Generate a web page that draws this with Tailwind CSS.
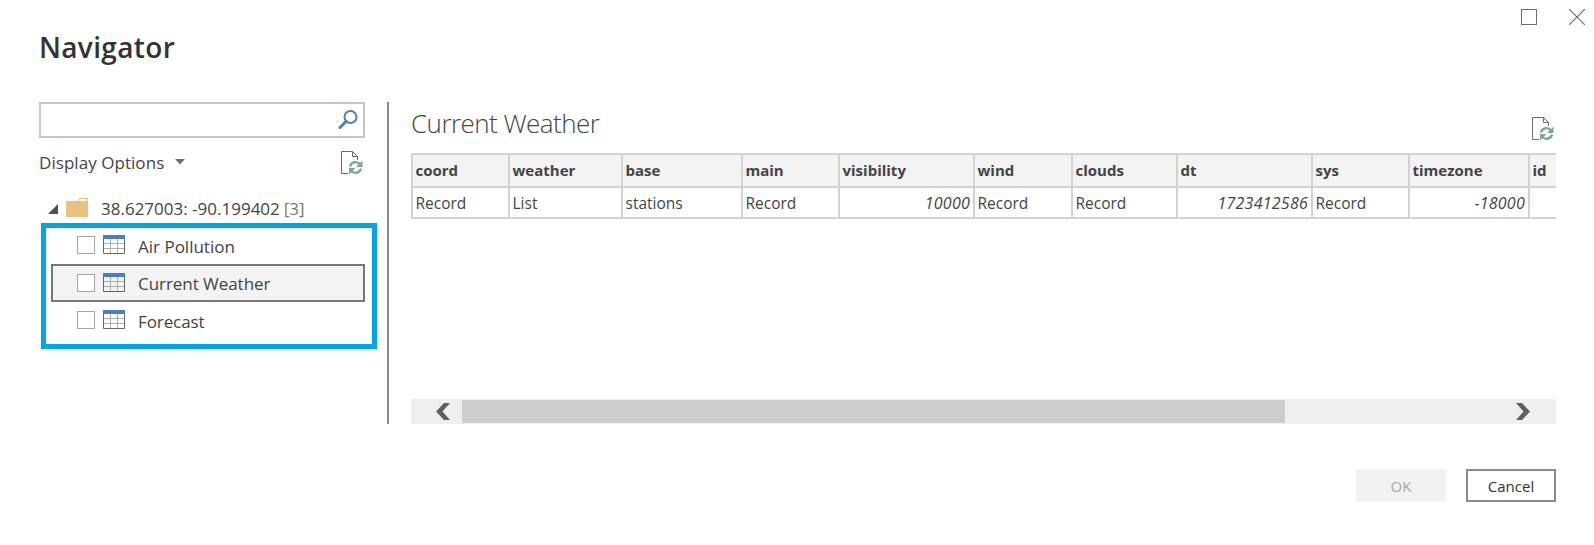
<!DOCTYPE html>
<html lang="en">
<head>
<meta charset="utf-8">
<title>Navigator</title>
<script src="https://cdn.jsdelivr.net/npm/@tailwindcss/browser@4"></script>
</head>
<body class="relative h-[545px] w-[1594px] overflow-hidden bg-white font-['Open_Sans',sans-serif] text-[#444]">
<svg width="0" height="0" class="absolute">
  <defs>
    <symbol id="refresh" viewBox="0 0 22 24">
      <path d="M7 22.500H.5V.5H11.500L16.500 5.500V9M11.500 .5V5.500H16.500" fill="none" stroke="#6a6a6a"/>
      <path d="M9 15.500A5.600 5.600 0 0 1 19 13.500M20 17.500A5.600 5.600 0 0 1 10 19.500" fill="none" stroke="#7aaa96" stroke-width="2.400"/>
      <path d="M21.500 9.500V16H15ZM8 23.500V17H14.500Z" fill="#7aaa96"/>
    </symbol>
    <symbol id="table" viewBox="0 0 22 19">
      <path d="M1 8.500H21M1 13.500H21M7.500 4V18M14.500 4V18" stroke="#adadad" fill="none"/>
      <path d="M.5 3V18.500H21.500V3" stroke="#666" fill="none"/>
      <path d="M0 0H22V4H0Z" fill="#4a80bb"/>
    </symbol>
  </defs>
</svg>

<header class="flex h-[102px] justify-between">
  <h1 class="ml-[39px] mt-[26px] h-10 text-[28px] leading-[42px] font-semibold tracking-[.35px] text-[#333]">Navigator</h1>
  <div class="mr-[9px] mt-[9px] flex gap-8">
    <svg width="16" height="16"><rect x=".5" y=".5" width="15" height="15" fill="none" stroke="#6e6e6e"/></svg>
    <svg width="16" height="16"><path d="M0 0L16 16M16 0L0 16" stroke="#6e6e6e" stroke-width="1.200"/></svg>
  </div>
</header>

<main class="flex h-[322px] pl-[39px]">
  <aside class="w-[348px]">
    <div class="flex h-9 w-[326px] items-start justify-end border-2 border-[#c6c6c6] pr-[5px] pt-[5px]">
      <svg width="20" height="21" fill="none" stroke="#4a80bb"><circle cx="12.500" cy="8" r="6" stroke-width="2"/><path d="M8 12.500L2 18.500" stroke-width="3" stroke-linecap="round"/></svg>
    </div>
    <div class="mt-[13px] flex h-6 w-[324px] items-start">
      <span class="text-[17px] leading-6 tracking-[.05px]">Display Options</span>
      <svg width="10" height="6" class="ml-[11px] mt-2"><path d="M0 0H10L5 5.500Z" fill="#6e6e6e"/></svg>
      <svg width="22" height="24" class="ml-auto"><use href="#refresh"/></svg>
    </div>
    <div class="mt-[21px] flex h-[27px] pl-[9px] text-[17px] leading-[26px]">
      <svg width="10" height="10" class="mt-2"><path d="M10 0V10H0Z" fill="#505050"/></svg>
      <svg width="22" height="19" class="ml-2 mt-[2px]"><path d="M0 3H11L14 0H22V19H0Z" fill="#e9c282"/><path d="M12.500 3L14.500 1H21V3Z" fill="#fff"/></svg>
      <span class="ml-[13px]">38.627003: -90.199402</span><span class="ml-1 text-[#777]">[3]</span>
    </div>
    <ul class="ml-[2px] h-[126px] w-[336px] border-5 border-[#00a4e8] pl-[5px] pt-0 text-[17px] leading-6">
      <li class="flex h-9 w-[314px] pl-[26px]">
        <i class="mt-2 size-[18px] border border-[#a6a6a6] bg-white"></i>
        <svg width="22" height="19" class="ml-2 mt-[7px]"><use href="#table"/></svg>
        <span class="ml-[13px] mt-[7px]">Air Pollution</span>
      </li>
      <li class="flex h-[38px] w-[314px] border-2 border-[#777] bg-[#f3f3f3] pl-[24px]">
        <i class="mt-2 size-[18px] border border-[#a6a6a6] bg-white"></i>
        <svg width="22" height="19" class="ml-2 mt-[7px]"><use href="#table"/></svg>
        <span class="ml-[13px] mt-[6px] tracking-[-.05px]">Current Weather</span>
      </li>
      <li class="flex h-9 w-[314px] pl-[26px]">
        <i class="mt-[9px] size-[18px] border border-[#a6a6a6] bg-white"></i>
        <svg width="22" height="19" class="ml-2 mt-2"><use href="#table"/></svg>
        <span class="ml-[13px] mt-2 tracking-[-.1px]">Forecast</span>
      </li>
    </ul>
  </aside>
  <div class="w-[2px] bg-[#888]"></div>
  <section class="ml-[22px] flex w-[1145px] flex-col">
    <div class="flex h-[51px] justify-between">
      <h2 class="mt-[3px] text-[26px] leading-9 font-light tracking-[-.55px]">Current Weather</h2>
      <svg width="22" height="24" class="mr-[2px] mt-[15px]"><use href="#refresh"/></svg>
    </div>
    <div class="w-full overflow-hidden">
      <table class="w-[1240px] table-fixed border-separate border-spacing-0 border-l-2 border-t-2 border-[#d2d2d2]">
        <colgroup><col class="w-[97px]"><col class="w-[113px]"><col class="w-[120px]"><col class="w-[97px]"><col class="w-[135px]"><col class="w-[98px]"><col class="w-[105px]"><col class="w-[135px]"><col class="w-[97px]"><col class="w-[120px]"><col class="w-[121px]"></colgroup>
        <thead>
          <tr class="h-[33px] bg-[#f3f3f3] text-left text-[15px] leading-[31px] font-bold *:border-r-2 *:border-b-2 *:border-[#d2d2d2] *:py-0 *:pr-0 *:pl-[2.500px]">
            <th>coord</th><th>weather</th><th>base</th><th>main</th><th>visibility</th><th>wind</th><th>clouds</th><th>dt</th><th>sys</th><th>timezone</th><th>id</th>
          </tr>
        </thead>
        <tbody>
          <tr class="h-[31px] text-[15.500px] leading-[27px] *:border-r-2 *:border-b-2 *:border-[#d2d2d2] *:pt-[2px] *:pb-0 *:pl-[2.500px] *:pr-[3px]">
            <td>Record</td><td>List</td><td>stations</td><td>Record</td><td class="text-right text-[16px] italic tracking-[.25px]">10000</td><td>Record</td><td>Record</td><td class="text-right text-[16px] italic tracking-[.25px]">1723412586</td><td>Record</td><td class="text-right text-[16px] italic tracking-[.25px]">-18000</td><td></td>
          </tr>
        </tbody>
      </table>
    </div>
    <div class="mt-auto flex h-[25px] items-center bg-[#efefef]">
      <svg width="14" height="17" class="ml-[25px]"><path d="M8 0H14L6.500 8.500L14 17H8L0 8.500Z" fill="#606060"/></svg>
      <div class="ml-3 h-[23px] w-[823px] bg-[#cdcdcd]"></div>
      <svg width="14" height="17" class="ml-auto mr-[26px]"><path d="M6 0H0L7.500 8.500L0 17H6L14 8.500Z" fill="#606060"/></svg>
    </div>
  </section>
</main>

<footer class="mt-[45px] flex justify-end gap-5 pr-[38px] text-[15px]">
  <button class="h-[33px] w-[90px] bg-[#f3f2f1] pt-[2px] text-[#a6a6a6]">OK</button>
  <button class="h-[33px] w-[90px] border-2 border-[#8a8a8a] bg-white pt-[2px] text-[#333]">Cancel</button>
</footer>
</body>
</html>
